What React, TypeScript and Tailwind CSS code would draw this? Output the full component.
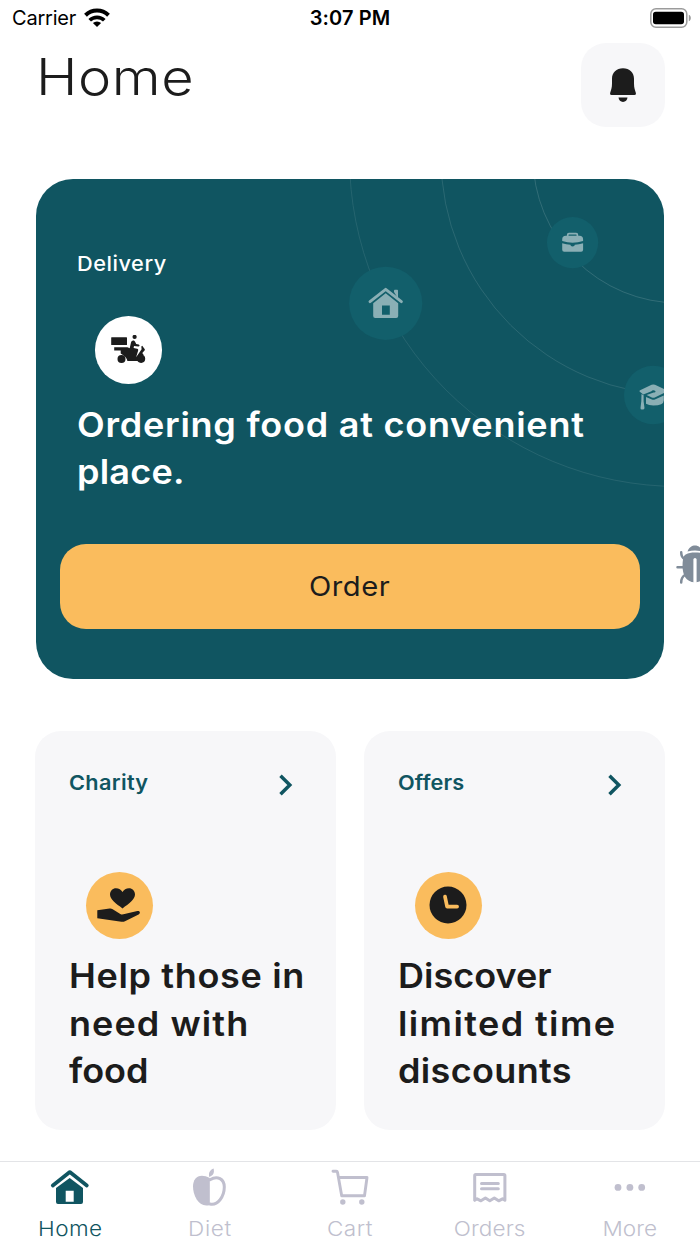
import type { ReactNode } from 'react';

function WifiIcon() {
  return (
    <svg width="26" height="20" viewBox="0 0 26 20" fill="none" stroke="#000" strokeWidth="4">
      <path d="M1.5 7.2a16.4 16.4 0 0 1 23 0" />
      <path d="M5.7 12.3a10.4 10.4 0 0 1 14.6 0" strokeWidth="3.7" />
      <path d="M13 19l-4.1-3.9a5.8 5.8 0 0 1 8.2 0z" fill="#000" stroke="none" />
    </svg>
  );
}

function BatteryIcon() {
  return (
    <svg width="42" height="20" viewBox="0 0 42 20">
      <rect x="0.8" y="0.8" width="36" height="18.4" rx="5.2" fill="none" stroke="#9b9b9b" strokeWidth="1.5" />
      <rect x="3" y="3.7" width="31" height="12.6" rx="2.8" fill="#000" />
      <path d="M38.8 6.7c2.7 1 2.7 5.6 0 6.600z" fill="#9b9b9b" />
    </svg>
  );
}

function BellIcon() {
  return (
    <svg width="28" height="34" viewBox="-1 0 28 34" fill="#1c1c1c">
      <path d="M13 .3C6.4.3 2 4.9 2 10.8v4.6c0 4.4-1 6.6-1.8 9.4-.4 1.4.1 2.2 1.3 2.2h23c1.2 0 1.7-.8 1.3-2.2-.8-2.8-1.8-5-1.8-9.4v-4.6C24 4.9 19.6.3 13 .3z" />
      <path d="M8.5 29.6h9c-.2 2.7-2.1 4.3-4.5 4.3s-4.3-1.6-4.5-4.3z" />
    </svg>
  );
}

function ScooterIcon() {
  return (
    <svg width="35" height="29" viewBox="0 0 35 29" fill="#1c1c1c">
      <rect x="0.2" y="2.2" width="15.8" height="7.8" rx="0.5" />
      <circle cx="23.6" cy="1.9" r="2.1" />
      <path d="M3.200 12.200h13.300l2.200 1L20 7.400c.5-2.400 3.200-2.700 4.100-.6l1.100 2.200 2.500.5c1.300.4 1 2.200-.4 2.100l-4.300-.6-.4 2 3.600.7c1 .3 1.200 1 .9 2l-2 6.500 5.500-7.900-.3-2.700 1-.8 1.900 2.600c.9.900.8 1.500.3 2.100l-2.200 2.500 1.400 2-4.500 6h-11.800c-.2-2.500-2.200-5-6.700-7.600V15.500H3.200z" />
      <circle cx="10.5" cy="24" r="4" />
      <circle cx="30.1" cy="23.8" r="4.100" />
    </svg>
  );
}

function HandHeartIcon() {
  return (
    <svg width="44" height="35" viewBox="0 0 44 35" fill="#1c1c1c">
      <path d="M25.5 20.4C19 15.8 13 11.4 13 6.600 13 2.800 15.700.3 19 .3c2.800 0 5.200 1.500 6.500 3.800C26.800 1.800 29.200.3 32 .3c3.300 0 6 2.500 6 6.300 0 4.800-6 9.200-12.500 13.800z" />
      <path d="M.3 22.200l12.400-1.700c1.200-.1 2 .1 3 .7l7.600 4.700c1 .5 2 .6 3.200.4l13.800-3.200c2.600-.4 3.600 2.100 1.300 3.300L28 33.200c-1.300.6-2.200.7-3.600.5L.3 30.200z" />
    </svg>
  );
}

function ClockIcon() {
  return (
    <svg width="38" height="38" viewBox="0 0 38 38">
      <circle cx="19" cy="19" r="18.5" fill="#1c1c1c" />
      <path d="M16 10.600l2.100 10h10" fill="none" stroke="#fabc5d" strokeWidth="3.7" strokeLinecap="round" strokeLinejoin="round" />
    </svg>
  );
}

function Chevron() {
  return (
    <svg width="16" height="22" viewBox="0 0 16 22" fill="none" stroke="#105561" strokeWidth="3.5">
      <path d="M2.5 1.700L11.800 11l-9.300 9.300" />
    </svg>
  );
}

function BugIcon() {
  return (
    <svg width="38" height="40" viewBox="0 0 38 40" fill="#808c99">
      <path d="M11.500 6.500C13 2.200 16 .5 19 .5s6 1.700 7.500 6q-7.500-2-15 0z" />
      <path d="M7 14.500C7.600 9.500 11 7.500 19 7.500s11.400 2 12 7c1.500 10 0 22.700-12 22.700S5.500 24.500 7 14.500z" />
      <path d="M5.200 7.200c0 3.800.7 5.600 3.600 6.800M1.500 22.200h7M5.200 37.500c0-3.800.8-5.800 3.800-7.500M32.800 7.200c0 3.800-.7 5.600-3.600 6.800M36.500 22.200h-7M32.800 37.500c0-3.800-.8-5.800-3.800-7.500" fill="none" stroke="#808c99" strokeWidth="2.5" strokeLinecap="round" />
      <path d="M19 14.500v22" stroke="#fff" strokeWidth="3.2" strokeLinecap="round" />
    </svg>
  );
}

// Orbit rings and bubbles in the corner of the delivery card
function Orbits() {
  return (
    <svg className="absolute inset-0" width="628" height="500" viewBox="0 0 628 500" fill="none">
      <g stroke="#ffffff" strokeWidth="0.9">
        <circle cx="643" cy="-22" r="146" strokeOpacity="0.16" />
        <circle cx="643" cy="-22" r="238" strokeOpacity="0.13" />
        <circle cx="643" cy="-22" r="329.5" strokeOpacity="0.1" />
      </g>
      <g fill="#125f6b">
        <circle cx="349.7" cy="124.3" r="36.6" />
        <circle cx="536.6" cy="63.6" r="25.6" />
        <circle cx="617.3" cy="216" r="29.3" />
      </g>
      <g fill="#8aafb5">
        <path d="M334 122.7l15.700-12.400 15.700 12.400" fill="none" stroke="#8aafb5" strokeWidth="2.9" strokeLinecap="round" strokeLinejoin="round" />
        <path d="M358 113v-1.500q0-.8.8-.8h2.400q.8 0 .8.8v8z" />
        <path d="M349.7 114.300l12.500 10V137q0 2-2 2h-21q-2 0-2-2v-12.700zM346 126.500v9.300h7.800v-9.300z" fillRule="evenodd" />
        <path d="M531.700 57.500v-1.600q0-1.200 1.200-1.200h7.300q1.200 0 1.200 1.200v1.600" fill="none" stroke="#8aafb5" strokeWidth="1.700" />
        <path d="M526.200 60.500q0-3.700 3.600-3.700h13.700q3.600 0 3.600 3.700v1.600q-10.500 3.300-20.900 0z" />
        <path d="M526.200 64.200q4 1.300 8.200 1.600 0 1.700 2.200 1.700t2.200-1.700q4.200-.3 8.300-1.600v6.600q0 2-2 2h-16.900q-2 0-2-2z" />
        <g transform="translate(0 -3.600)">
          <path d="M603.800 216.300q-.9-.7.300-1.500l11.500-5.400q1.700-.8 3.400 0l11.400 5.400q1.200.8.3 1.500l-11.900 5.700q-1.500.6-3 0l-5.200-2.300 7-2.700q1.500.4 2-.7-.1-1.600-2.200-1.500-1.600 0-1.900 1.100l-8.200 3.200z" />
          <path d="M610 221.600l5.900 2.500q1.500.6 3 0l8.900-4v4.800q0 5.200-10.500 5.200-4.500 0-7.300-1.700z" />
          <path d="M607.600 219.800v6l.9 6.700q0 1.600-2 1.600h-.6q-1.600 0-1.400-1.600l.8-6.700.2-7.200z" />
        </g>
      </g>
    </svg>
  );
}

type FeatureCardProps = {
  label: string;
  lines: { text: string; spacing: string }[];
  labelSpacing: string;
  icon: ReactNode;
};

function FeatureCard({ label, lines, labelSpacing, icon }: FeatureCardProps) {
  return (
    <div className="h-[399px] rounded-[26px] bg-[#f7f7f9] pt-[38px] pl-[34px]">
      <div className="flex h-7 items-start justify-between pr-[42px]">
        <span className={`origin-left scale-x-[1.06] text-[20.5px] leading-7 font-semibold text-[#105561] ${labelSpacing}`}>{label}</span>
        <div className="mt-[5px]"><Chevron /></div>
      </div>
      <div className="mt-[74.5px] ml-[16.5px] flex size-[67.5px] items-center justify-center rounded-full bg-[#fabc5d]">
        {icon}
      </div>
      <div className="mt-[13px] origin-left scale-x-[1.06] text-[34px] leading-[47.5px] font-semibold whitespace-nowrap">
        {lines.map((line) => (
          <div key={line.text} className={line.spacing}>{line.text}</div>
        ))}
      </div>
    </div>
  );
}

const tabs = [
  {
    label: 'Home',
    style: 'text-[#105561] tracking-[0.4px]',
    icon: (
      <>
        <path d="M2.800 17.400L19.800 4.100l17 13.300" strokeWidth="3.8" strokeLinejoin="round" />
        <path d="M19.700 10l13.300 10v14q0 2-2 2H8q-2 0-2-2V20zM15.700 22.700v11h8v-11z" fill="currentColor" stroke="none" fillRule="evenodd" />
      </>
    ),
  },
  {
    label: 'Diet',
    style: 'text-[#c0bfce] tracking-[0.6px]',
    icon: (
      <>
        <path d="M19.800 10C9.500 4.500 3 9.500 3 18.500 3 28 9.500 40.500 19.800 37z" fill="currentColor" stroke="none" />
        <path d="M20 11.700c7.500-4.500 14.300-.8 14.300 7.300 0 9.500-6.500 18.800-14.300 17" strokeWidth="3" />
        <path d="M19.300 9c-1.200-4 .8-7 4.300-8.400 1 4-.2 7-4.300 8.400z" fill="currentColor" stroke="none" />
      </>
    ),
  },
  {
    label: 'Cart',
    style: 'text-[#c0bfce] tracking-[0.5px]',
    icon: (
      <>
        <path d="M3 3.200h3.300q1 0 1.200 1l4.200 23.500h22.800L37 9.500H8.500" strokeWidth="2.9" strokeLinejoin="round" />
        <circle cx="12.8" cy="34" r="2.7" fill="currentColor" stroke="none" />
        <circle cx="31.8" cy="34" r="2.7" fill="currentColor" stroke="none" />
      </>
    ),
  },
  {
    label: 'Orders',
    style: 'text-[#c0bfce] tracking-[0.1px]',
    icon: (
      <>
        <path d="M4.700 32.300V7.500q0-1 1-1h28.200q1 0 1 1v24.800l-2.400-1.500-3.800 2-4.400-2.900-4.500 2.900-4.400-2.900-4.500 2.900-3.800-2z" strokeWidth="3" strokeLinejoin="round" />
        <path d="M11.500 15.500h16.800M11.500 20.700h16.800" strokeWidth="3" />
      </>
    ),
  },
  {
    label: 'More',
    style: 'text-[#c0bfce]',
    icon: (
      <g fill="currentColor" stroke="none">
        <circle cx="8" cy="19.4" r="3.4" />
        <circle cx="19.9" cy="19.4" r="3.4" />
        <circle cx="31.7" cy="19.4" r="3.4" />
      </g>
    ),
  },
];

function TabBar() {
  return (
    <nav className="grid h-[83px] grid-cols-5 border-t border-[#e3e4e7] bg-white">
      {tabs.map((tab) => (
        <div key={tab.label} className={`flex flex-col items-center pt-1.5 ${tab.style}`}>
          <svg width="40" height="40" viewBox="0 0 40 40" fill="none" stroke="currentColor" strokeLinecap="round">
            {tab.icon}
          </svg>
          <span className="mt-[7px] scale-x-110 text-[20.5px] leading-7 font-light">{tab.label}</span>
        </div>
      ))}
    </nav>
  );
}

export default function App() {
  return (
    <div className="relative flex h-[1244px] w-[700px] flex-col overflow-hidden bg-white font-['Inter',sans-serif] text-[#1c1c1c]">
      <header className="grid h-9 grid-cols-3 items-center text-black">
        <div className="flex items-center gap-2 pl-3">
          <span className="text-[20px] leading-6 tracking-[-0.2px]">Carrier</span>
          <WifiIcon />
        </div>
        <span className="text-center text-[20px] leading-6 font-semibold tracking-[0.1px]">3:07 PM</span>
        <div className="flex justify-end pr-2">
          <BatteryIcon />
        </div>
      </header>

      <div className="flex h-[143px] items-start justify-between pt-[6.5px] pr-[35.5px] pl-9">
        <h1 className="mt-[2.5px] origin-left scale-x-[1.12] text-[50px] leading-[64px] font-light tracking-[0.5px]">Home</h1>
        <button className="flex size-[84px] items-center justify-center rounded-[25px] bg-[#f7f7f9]">
          <BellIcon />
        </button>
      </div>

      <section className="relative mx-9 h-[500px] shrink-0 overflow-hidden rounded-[37px] bg-[#105561] px-6 pt-[71px]">
        <Orbits />
        <div className="relative pl-[17px] text-white">
          <p className="origin-left scale-x-[1.06] text-[20.5px] leading-7 font-medium tracking-[0.5px]">Delivery</p>
          <div className="mt-[38px] ml-[17.5px] flex size-[67.5px] items-center justify-center rounded-full bg-white">
            <ScooterIcon />
          </div>
          <div className="mt-[17px] origin-left scale-x-[1.06] text-[34px] leading-[47.5px] font-semibold whitespace-nowrap">
            <div className="tracking-[0.7px]">Ordering food at convenient</div>
            <div className="tracking-[0.2px]">place.</div>
          </div>
        </div>
        <button className="relative mt-12 flex h-[85px] w-full items-center justify-center rounded-[26px] bg-[#fabc5d] pt-0.5">
          <span className="scale-x-[1.08] text-[27px] tracking-[0.5px]">Order</span>
        </button>
      </section>

      <section className="mt-[52px] grid grid-cols-2 gap-7 px-[35px]">
        <FeatureCard
          label="Charity"
          labelSpacing="tracking-[0.3px]"
          icon={<HandHeartIcon />}
          lines={[
            { text: 'Help those in', spacing: 'tracking-[0.6px]' },
            { text: 'need with', spacing: 'tracking-[1px]' },
            { text: 'food', spacing: 'tracking-[0px]' },
          ]}
        />
        <FeatureCard
          label="Offers"
          labelSpacing="tracking-[0.1px]"
          icon={<ClockIcon />}
          lines={[
            { text: 'Discover', spacing: 'tracking-[0px]' },
            { text: 'limited time', spacing: 'tracking-[1.3px]' },
            { text: 'discounts', spacing: 'tracking-[0.3px]' },
          ]}
        />
      </section>

      <div className="mt-auto">
        <TabBar />
      </div>

      {/* Debug handle docked past the right edge */}
      <div className="absolute top-[545px] left-[675.5px]">
        <BugIcon />
      </div>
    </div>
  );
}
